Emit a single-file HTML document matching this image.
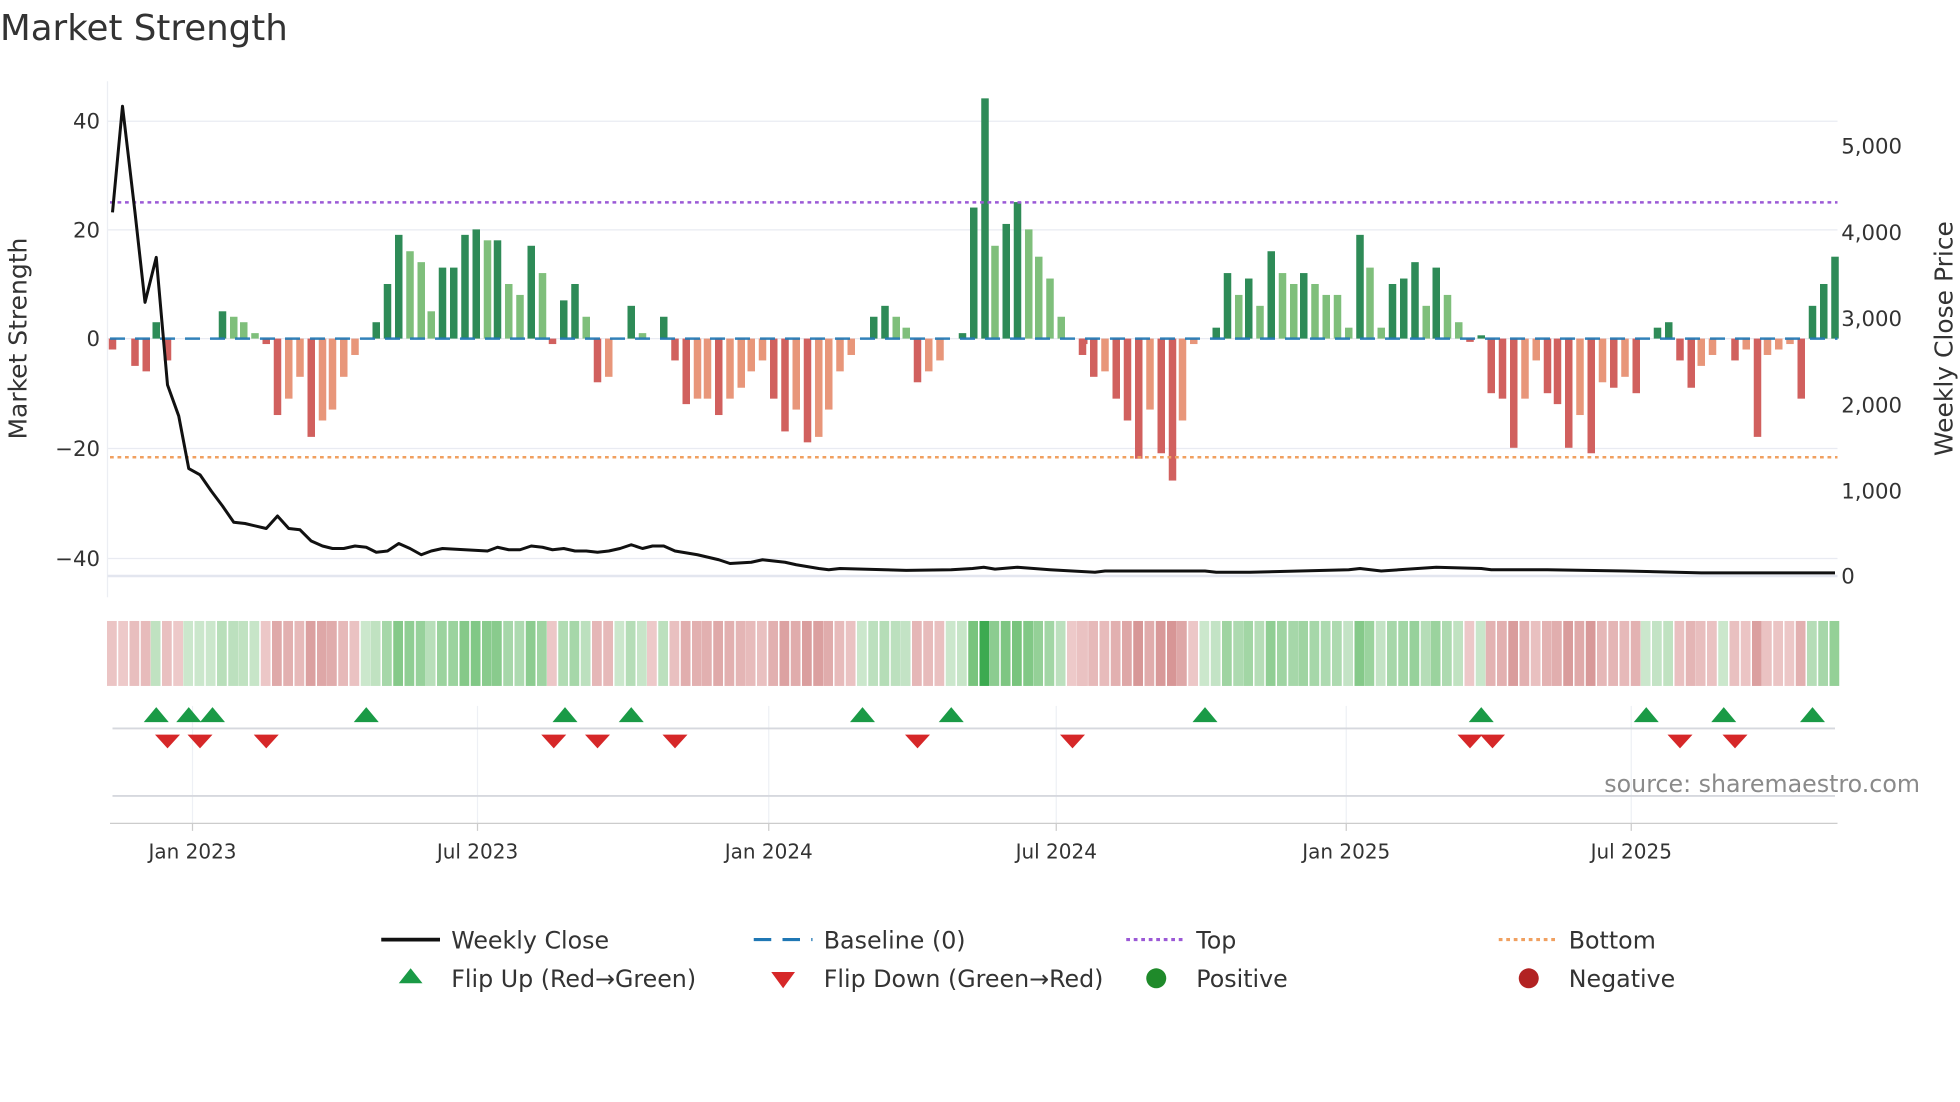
<!DOCTYPE html>
<html><head><meta charset="utf-8"><style>
html,body{margin:0;padding:0;background:#fff;width:1960px;height:1102px;overflow:hidden}
svg{display:block}
text{font-family:"DejaVu Sans","Liberation Sans",sans-serif;fill:#333}
</style></head><body>
<svg id="s" width="1960" height="1102" viewBox="0 0 1568 882" preserveAspectRatio="none" xmlns="http://www.w3.org/2000/svg">
<text x="0" y="32" font-size="28.5" fill="#333">Market Strength</text>
<g stroke="#e9ebf2" stroke-width="1">
<line x1="86" y1="97" x2="1470" y2="97"/><line x1="86" y1="184" x2="1470" y2="184"/>
<line x1="86" y1="271" x2="1470" y2="271"/><line x1="86" y1="359" x2="1470" y2="359"/>
<line x1="86" y1="447" x2="1470" y2="447"/>
</g>
<line x1="86" y1="65" x2="86" y2="478" stroke="#eceef3"/>
<line x1="86" y1="461" x2="1470" y2="461" stroke="#e3e6ef" stroke-width="2"/>
<g font-size="17" text-anchor="end">
<text x="80" y="103">40</text><text x="80" y="190">20</text><text x="80" y="277">0</text>
<text x="80" y="365">−20</text><text x="80" y="453">−40</text>
</g>
<g font-size="17">
<text x="1473" y="123">5,000</text><text x="1473" y="192">4,000</text><text x="1473" y="261">3,000</text>
<text x="1473" y="330">2,000</text><text x="1473" y="399">1,000</text><text x="1473" y="467">0</text>
</g>
<text transform="translate(21,271) rotate(-90)" font-size="20" text-anchor="middle">Market Strength</text>
<text transform="translate(1562,271) rotate(-90)" font-size="20" text-anchor="middle">Weekly Close Price</text>
<g id="bars"></g>
<line x1="88" y1="271" x2="1470" y2="271" stroke="#1f77b4" stroke-width="2" stroke-dasharray="12,8" opacity="0.9"/>
<line x1="88" y1="162" x2="1470" y2="162" stroke="#9b59d6" stroke-width="2" stroke-dasharray="3,3"/>
<line x1="88" y1="366" x2="1470" y2="366" stroke="#f0a060" stroke-width="2" stroke-dasharray="3,3"/>
<polyline id="price" fill="none" stroke="#111" stroke-width="2.4" stroke-linejoin="round"/>
<g id="strip"></g>
<g stroke="#eef0f5"><line x1="154" y1="565" x2="154" y2="660"/><line x1="382" y1="565" x2="382" y2="660"/><line x1="615" y1="565" x2="615" y2="660"/><line x1="845" y1="565" x2="845" y2="660"/><line x1="1077" y1="565" x2="1077" y2="660"/><line x1="1305" y1="565" x2="1305" y2="660"/></g>
<line x1="90" y1="583" x2="1468" y2="583" stroke="#d6d8de" stroke-width="1.5"/>
<line x1="90" y1="637" x2="1468" y2="637" stroke="#d6d8de" stroke-width="1.5"/>
<line x1="88" y1="659" x2="1470" y2="659" stroke="#ccc" stroke-width="1"/>
<g id="marks"></g>
<text x="1536" y="634" font-size="19" text-anchor="end" style="fill:#8a8a8a">source: sharemaestro.com</text>
<g stroke="#ccc">
<line x1="154" y1="659" x2="154" y2="665"/><line x1="382" y1="659" x2="382" y2="665"/><line x1="615" y1="659" x2="615" y2="665"/><line x1="845" y1="659" x2="845" y2="665"/><line x1="1077" y1="659" x2="1077" y2="665"/><line x1="1305" y1="659" x2="1305" y2="665"/>
</g>
<g font-size="16" text-anchor="middle">
<text x="154" y="687">Jan 2023</text><text x="382" y="687">Jul 2023</text><text x="615" y="687">Jan 2024</text>
<text x="845" y="687">Jul 2024</text><text x="1077" y="687">Jan 2025</text><text x="1305" y="687">Jul 2025</text>
</g>
<g font-size="19">
<line x1="305" y1="752" x2="352" y2="752" stroke="#111" stroke-width="3"/><text x="361" y="759">Weekly Close</text>
<line x1="603" y1="752" x2="650" y2="752" stroke="#1f77b4" stroke-width="2.5" stroke-dasharray="14,9"/><text x="659" y="759">Baseline (0)</text>
<line x1="901" y1="752" x2="948" y2="752" stroke="#9b59d6" stroke-width="2.5" stroke-dasharray="3,3"/><text x="957" y="759">Top</text>
<line x1="1199" y1="752" x2="1246" y2="752" stroke="#f0a060" stroke-width="2.5" stroke-dasharray="3,3"/><text x="1255" y="759">Bottom</text>
<polygon points="319,787 338,787 328.5,775" fill="#1a9a46"/><text x="361" y="790">Flip Up (Red→Green)</text>
<polygon points="617,778 636,778 626.5,791" fill="#d62728"/><text x="659" y="790">Flip Down (Green→Red)</text>
<circle cx="925" cy="783" r="8" fill="#1f8a2a"/><text x="957" y="790">Positive</text>
<circle cx="1223" cy="783" r="8" fill="#b22222"/><text x="1255" y="790">Negative</text>
</g>
</svg>
<script>
var NS="http://www.w3.org/2000/svg";
function el(p,t,a){var e=document.createElementNS(NS,t);for(var k in a)e.setAttribute(k,a[k]);p.appendChild(e);return e;}
var D="#2e8b57",L="#7fbf7b",R="#d1605e",S="#e8967a";
var B=[[90,-2,R],[99,0,R],[108,-5,R],[117,-6,R],[125,3,D],[134,-4,R],[143,0,R],[151,0,D],[160,0,D],[169,0,D],[178,5,D],[187,4,L],[195,3,L],[204,1,L],[213,-1,R],[222,-14,R],[231,-11,S],[240,-7,S],[249,-18,R],[258,-15,S],[266,-13,S],[275,-7,S],[284,-3,S],[293,0,D],[301,3,D],[310,10,D],[319,19,D],[328,16,L],[337,14,L],[345,5,L],[354,13,D],[363,13,D],[372,19,D],[381,20,D],[390,18,L],[398,18,D],[407,10,L],[416,8,L],[425,17,D],[434,12,L],[442,-1,R],[451,7,D],[460,10,D],[469,4,L],[478,-8,R],[487,-7,S],[496,0,D],[505,6,D],[514,1,L],[522,0,R],[531,4,D],[540,-4,R],[549,-12,R],[558,-11,S],[566,-11,S],[575,-14,R],[584,-11,S],[593,-9,S],[601,-6,S],[610,-4,S],[619,-11,R],[628,-17,R],[637,-13,S],[646,-19,R],[655,-18,S],[663,-13,S],[672,-6,S],[681,-3,S],[690,0,D],[699,4,D],[708,6,D],[717,4,L],[725,2,L],[734,-8,R],[743,-6,S],[752,-4,S],[761,0,D],[770,1,D],[779,24,D],[788,44,D],[796,17,L],[805,21,D],[814,25,D],[823,20,L],[831,15,L],[840,11,L],[849,4,L],[858,0,R],[867,-1,R],[866,-3,R],[875,-7,R],[884,-6,S],[893,-11,R],[902,-15,R],[911,-22,R],[920,-13,S],[929,-21,R],[938,-26,R],[946,-15,S],[955,-1,S],[964,0,D],[973,2,D],[982,12,D],[991,8,L],[999,11,D],[1008,6,L],[1017,16,D],[1026,12,L],[1035,10,L],[1043,12,D],[1052,10,L],[1061,8,L],[1070,8,L],[1079,2,L],[1088,19,D],[1096,13,L],[1105,2,L],[1114,10,D],[1123,11,D],[1132,14,D],[1141,6,L],[1149,13,D],[1158,8,L],[1167,3,L],[1176,-0.6,R],[1185,0.6,D],[1193,-10,R],[1202,-11,R],[1211,-20,R],[1220,-11,S],[1229,-4,S],[1238,-10,R],[1246,-12,R],[1255,-20,R],[1264,-14,S],[1273,-21,R],[1282,-8,S],[1291,-9,R],[1300,-7,S],[1309,-10,R],[1317,0,D],[1326,2,D],[1335,3,D],[1344,-4,R],[1353,-9,R],[1361,-5,S],[1370,-3,S],[1379,0,D],[1388,-4,R],[1397,-2,S],[1406,-18,R],[1414,-3,S],[1423,-2,S],[1432,-1,S],[1441,-11,R],[1450,6,D],[1459,10,D],[1468,15,D]];
var g=document.getElementById("bars"),st=document.getElementById("strip");
B.forEach(function(b){var x=b[0],v=b[1],h=Math.abs(v)*4.37;
 if(h>0.5)el(g,"rect",{x:x-3,y:v>0?271-h:271,width:6,height:h,fill:b[2]});
 var pos=(b[2]==D||b[2]==L),t=Math.min(1,0.25+Math.abs(v)/30);
 var c=pos?[Math.round(230-(230-120)*t),Math.round(242-(242-196)*t),Math.round(230-(230-125)*t)]:[Math.round(244-(244-215)*t),Math.round(218-(218-150)*t),Math.round(218-(218-150)*t)];
 if(x==788)c=[60,170,80];
 el(st,"rect",{x:x-4.4,y:497,width:7.8,height:52,fill:"rgb("+c+")"});});
var P=[[90,170],[98,85],[108,170],[116,242],[125,206],[134,308],[143,333],[151,375],[160,380],[169,393],[178,405],[187,418],[196,419],[213,423],[222,413],[231,423],[240,424],[249,433],[258,437],[266,439],[275,439],[284,437],[293,438],[301,442],[310,441],[319,435],[328,439],[337,444],[345,441],[354,439],[372,440],[390,441],[398,438],[407,440],[416,440],[425,437],[434,438],[442,440],[451,439],[460,441],[469,441],[478,442],[487,441],[496,439],[505,436],[514,439],[522,437],[531,437],[540,441],[558,444],[575,448],[584,451],[601,450],[610,448],[628,450],[637,452],[655,455],[663,456],[672,455],[708,456],[725,456.5],[761,456],[778,455],[787,454],[796,455.5],[814,454],[840,456],[876,458],[884,457],[964,457],[973,458],[1000,458],[1079,456],[1088,455],[1105,457],[1149,454],[1185,455],[1193,456],[1220,456],[1238,456],[1300,457],[1361,458.5],[1468,458.5]];
document.getElementById("price").setAttribute("points",P.map(function(p){return p.join(",")}).join(" "));
var m=document.getElementById("marks");
[125,151,170,293,452,505,690,761,964,1185,1317,1379,1450].forEach(function(x){el(m,"polygon",{points:(x-10)+",578 "+(x+10)+",578 "+x+",566",fill:"#1a9a46"});});
[134,160,213,443,478,540,734,858,1176,1194,1344,1388].forEach(function(x){el(m,"polygon",{points:(x-10)+",588 "+(x+10)+",588 "+x+",599",fill:"#d62728"});});
</script>
</body></html>
